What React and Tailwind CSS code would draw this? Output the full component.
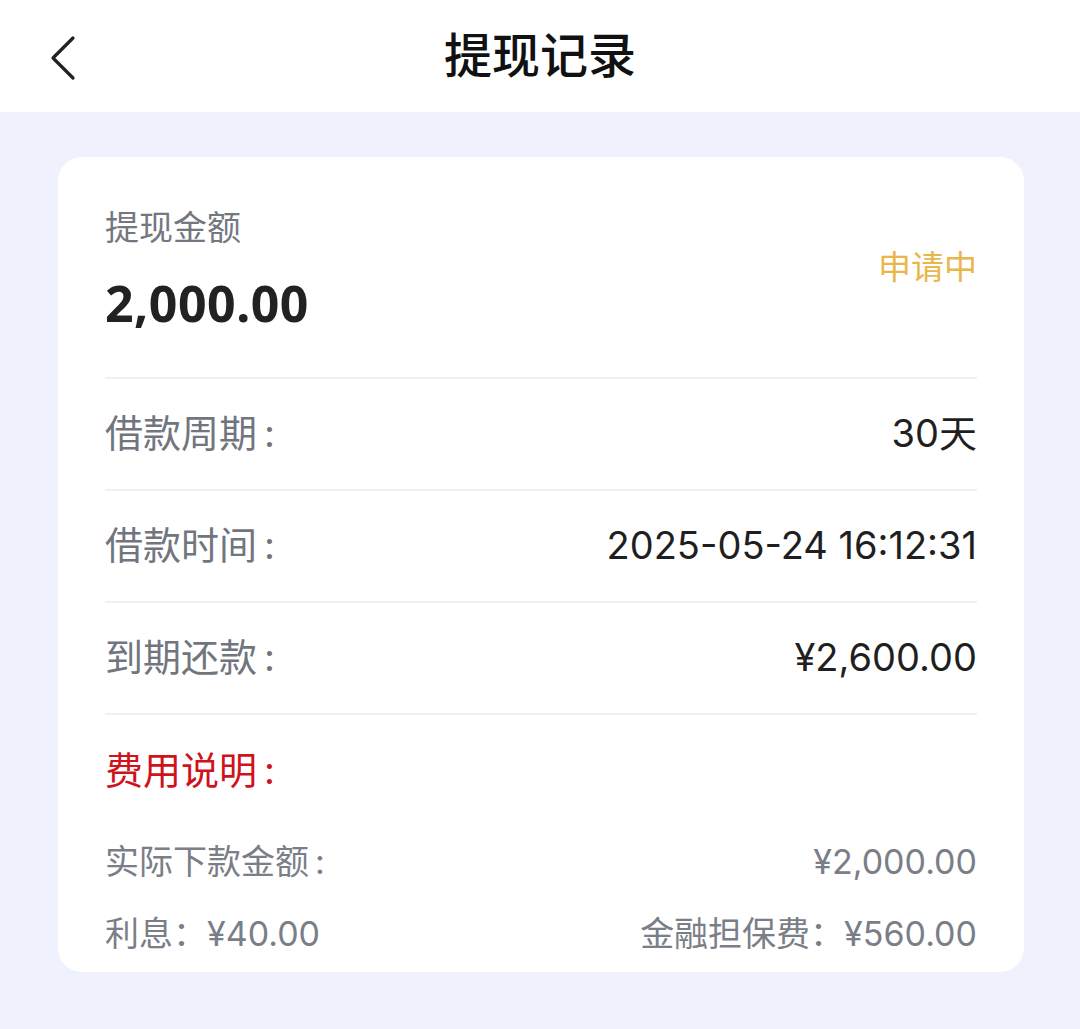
export default function App() {
  const rows = [
    { label: "借款周期", value: "30天" },
    { label: "借款时间", value: "2025-05-24 16:12:31" },
    { label: "到期还款", value: "¥2,600.00" },
  ];

  return (
    <div
      className="min-h-[1029px] w-full bg-[#eff1fc]"
      style={{ fontFamily: 'Inter, "Noto Sans CJK SC", sans-serif' }}
    >
      {/* HEADER */}
      <div className="relative flex h-[112px] items-center justify-center bg-white">
        <button className="absolute left-[44px] top-[28px] p-1">
          <svg width="32" height="50" viewBox="0 0 32 50" fill="none">
            <path
              d="M25 6 L5 26 L25 46"
              stroke="#222"
              strokeWidth="3.2"
              strokeLinecap="round"
              strokeLinejoin="round"
            />
          </svg>
        </button>
        <h1 className="text-[48px] font-medium leading-none text-[#111]">提现记录</h1>
      </div>

      {/* CARD */}
      <div className="pl-[58px] pr-[56px] pt-[45px]">
        <div className="rounded-[24px] bg-white pl-[47px] pr-[47px]">
          {/* AMOUNT */}
          <div className="flex items-center justify-between pb-[44px] pt-[49px]">
            <div className="flex flex-col gap-[23px]">
              <p className="text-[34px] leading-[44px] text-[#73777f]">提现金额</p>
              <p
                className="text-[50px] font-bold leading-[60px] tracking-[0.5px] text-[#222]"
                style={{ fontFamily: '"Noto Sans", sans-serif' }}
              >
                2,000.00
              </p>
            </div>
            <p className="pb-[6px] text-[33px] leading-[44px] text-[#e9b64a]">申请中</p>
          </div>

          {/* ROWS */}
          {rows.map((r) => (
            <div
              key={r.label}
              className="flex h-[112px] items-center justify-between border-t-[2px] border-[#f0f0f2] pb-[2px]"
            >
              <span className="text-[38px] text-[#71757e]">
                {r.label}
                <span className="ml-[7px]">:</span>
              </span>
              <span className="text-[38px] text-[#1f1f1f]">{r.value}</span>
            </div>
          ))}

          {/* FEES */}
          <div className="flex h-[112px] items-center border-t-[2px] border-[#f0f0f2]">
            <span className="text-[38px] text-[#d0121b]">
              费用说明
              <span className="ml-[7px]">:</span>
            </span>
          </div>
          <div className="flex h-[72px] items-center justify-between text-[34px] text-[#7a7e87]">
            <span>
              实际下款金额
              <span className="ml-[6px]">:</span>
            </span>
            <span>¥2,000.00</span>
          </div>
          <div className="flex h-[75px] items-center justify-between pb-[2px] text-[34px] text-[#7a7e87]">
            <span>利息：¥40.00</span>
            <span>金融担保费：¥560.00</span>
          </div>
        </div>
      </div>
    </div>
  );
}
